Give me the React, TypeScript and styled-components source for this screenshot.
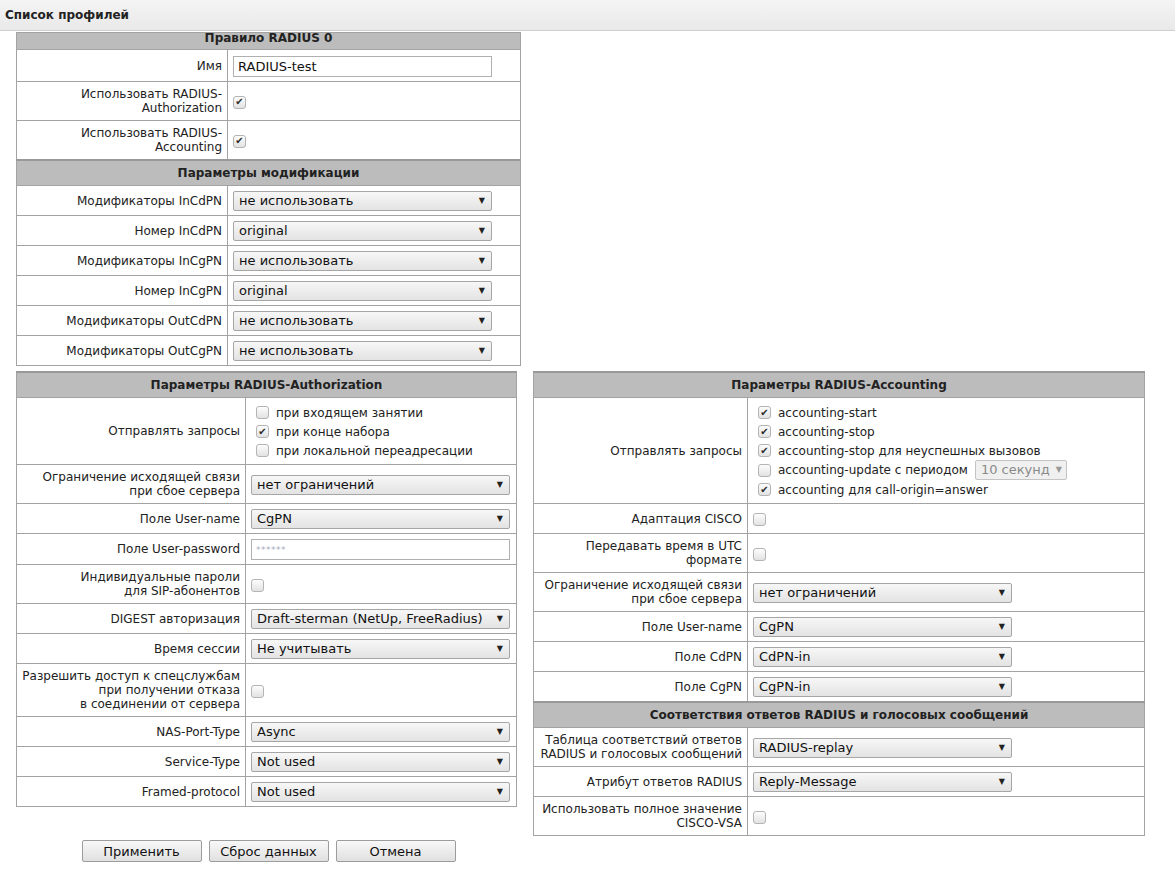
import styled, { createGlobalStyle } from "styled-components";

const GlobalStyle = createGlobalStyle`
  body {
    margin: 0;
    background: #fff;
    color: #222;
    font-family: "DejaVu Sans", "Noto Sans", sans-serif;
    font-size: 12px;
  }
`;

const TitleBar = styled.div`
  height: 30px;
  display: flex;
  align-items: center;
  padding-left: 5px;
  background: linear-gradient(#f4f4f4, #e9e9e9);
  border-bottom: 1px solid #cfcfcf;
  font-weight: bold;
  color: #222;
`;

const Content = styled.div`
  padding: 1px 0 0 16px;
`;

const Columns = styled.div`
  display: flex;
  align-items: flex-start;
  gap: 16px;
  margin-top: 5px;
`;

const LeftColumn = styled.div`
  display: flex;
  flex-direction: column;
  align-items: center;
`;

const FormTable = styled.table<{ $w: number }>`
  width: ${({ $w }) => $w}px;
  table-layout: fixed;
  border-collapse: collapse;
  border: 1px solid #a3a3a3;
`;

const LabelCol = styled.col<{ $w: number }>`
  width: ${({ $w }) => $w}px;
`;

const Tr = styled.tr`
  height: 30px;
`;

const Head = styled.th<{ $clipped?: boolean }>`
  background: #bcbcbc;
  border: 1px solid #a3a3a3;
  border-top: ${({ $clipped }) => ($clipped ? "none" : "2px solid #999")};
  padding: ${({ $clipped }) => ($clipped ? "0 5px 5px" : "5px")};
  line-height: ${({ $clipped }) => ($clipped ? "11px" : "14px")};
  font-weight: bold;
  text-align: center;
`;

const Label = styled.td`
  border: 1px solid #a3a3a3;
  padding: 5px 5px;
  line-height: 14px;
  text-align: right;
  vertical-align: middle;
`;

const Value = styled.td`
  border: 1px solid #a3a3a3;
  padding: 5px 5px 4px;
  line-height: 14px;
  vertical-align: middle;
`;

const SelectBox = styled.div<{ $w: number; $disabled?: boolean }>`
  box-sizing: border-box;
  width: ${({ $w }) => $w}px;
  height: 20px;
  display: flex;
  align-items: center;
  justify-content: space-between;
  padding: 0 6px 0 5px;
  border: 1px solid ${({ $disabled }) => ($disabled ? "#c4c4c4" : "#a6a6a6")};
  border-radius: 2px;
  background: ${({ $disabled }) =>
    $disabled ? "#f0f0f0" : "linear-gradient(#f7f7f7, #e3e3e3)"};
  color: ${({ $disabled }) => ($disabled ? "#8a8a8a" : "#111")};
  font-size: 13px;
  white-space: nowrap;
`;

const Arrow = styled.span<{ $disabled?: boolean }>`
  font-size: 8px;
  color: ${({ $disabled }) => ($disabled ? "#999" : "#222")};
  margin-left: 6px;
`;

const TextInput = styled.div<{ $placeholder?: boolean }>`
  box-sizing: border-box;
  width: 259px;
  height: 21px;
  margin: ${({ $placeholder }) => ($placeholder ? "0" : "1px 0 0")};
  display: flex;
  align-items: center;
  padding: 0 4px;
  border: 1px solid #b0b0b0;
  background: #fff;
  color: ${({ $placeholder }) => ($placeholder ? "#aab" : "#111")};
  font-size: ${({ $placeholder }) => ($placeholder ? "9px" : "13px")};
  letter-spacing: ${({ $placeholder }) => ($placeholder ? "0.5px" : "0")};
`;

const Box = styled.span`
  box-sizing: border-box;
  width: 13px;
  height: 13px;
  flex: none;
  display: inline-flex;
  align-items: center;
  justify-content: center;
  border: 1px solid #b4b4b4;
  border-radius: 3px;
  background: linear-gradient(#fdfdfd, #e2e2e2);
  color: #2a2a2a;
  font-size: 10px;
  line-height: 1;
  vertical-align: middle;
`;

const OptionList = styled.div`
  display: flex;
  flex-direction: column;
`;

const OptionItem = styled.label<{ $tall?: boolean }>`
  display: flex;
  align-items: center;
  gap: 7px;
  height: ${({ $tall }) => ($tall ? 20 : 19)}px;
  padding-left: 5px;
  font-size: 12px;
  white-space: nowrap;
`;

const ButtonBar = styled.div`
  display: flex;
  gap: 7px;
  margin: 33px 0 0 4px;
`;

const Button = styled.button`
  box-sizing: border-box;
  width: 120px;
  height: 22px;
  padding: 0;
  border: 1px solid #9c9c9c;
  border-radius: 2px;
  background: linear-gradient(#f8f8f8, #e0e0e0);
  color: #111;
  font-family: "DejaVu Sans", sans-serif;
  font-size: 13px;
`;

const Check = ({ on }: { on?: boolean }) => <Box>{on ? "✔" : ""}</Box>;

const Select = ({ value, w = 259, disabled }: { value: string; w?: number; disabled?: boolean }) => (
  <SelectBox $w={w} $disabled={disabled}>
    <span>{value}</span>
    <Arrow $disabled={disabled}>▼</Arrow>
  </SelectBox>
);

const Lines = ({ text }: { text: string[] }) => (
  <>
    {text.map((t, i) => (
      <div key={i}>{t}</div>
    ))}
  </>
);

type RowProps = { label: string[]; children: React.ReactNode };

const Row = ({ label, children }: RowProps) => (
  <Tr>
    <Label>
      <Lines text={label} />
    </Label>
    <Value>{children}</Value>
  </Tr>
);

const modifiers = [
  ["Модификаторы InCdPN", "не использовать"],
  ["Номер InCdPN", "original"],
  ["Модификаторы InCgPN", "не использовать"],
  ["Номер InCgPN", "original"],
  ["Модификаторы OutCdPN", "не использовать"],
  ["Модификаторы OutCgPN", "не использовать"],
];

export default function App() {
  return (
    <>
      <GlobalStyle />
      <TitleBar>Список профилей</TitleBar>
      <Content>
        <FormTable $w={505}>
          <colgroup>
            <LabelCol $w={211} />
            <col />
          </colgroup>
          <tbody>
            <tr>
              <Head colSpan={2} $clipped>
                Правило RADIUS 0
              </Head>
            </tr>
            <Row label={["Имя"]}>
              <TextInput>RADIUS-test</TextInput>
            </Row>
            <Row label={["Использовать RADIUS-", "Authorization"]}>
              <Check on />
            </Row>
            <Row label={["Использовать RADIUS-", "Accounting"]}>
              <Check on />
            </Row>
            <tr>
              <Head colSpan={2}>Параметры модификации</Head>
            </tr>
            {modifiers.map(([label, value]) => (
              <Row key={label} label={[label]}>
                <Select value={value} />
              </Row>
            ))}
          </tbody>
        </FormTable>

        <Columns>
          <LeftColumn>
            <FormTable $w={501}>
              <colgroup>
                <LabelCol $w={229} />
                <col />
              </colgroup>
              <tbody>
                <tr>
                  <Head colSpan={2}>Параметры RADIUS-Authorization</Head>
                </tr>
                <Row label={["Отправлять запросы"]}>
                  <OptionList>
                    <OptionItem>
                      <Check />
                      при входящем занятии
                    </OptionItem>
                    <OptionItem>
                      <Check on />
                      при конце набора
                    </OptionItem>
                    <OptionItem>
                      <Check />
                      при локальной переадресации
                    </OptionItem>
                  </OptionList>
                </Row>
                <Row label={["Ограничение исходящей связи", "при сбое сервера"]}>
                  <Select value="нет ограничений" />
                </Row>
                <Row label={["Поле User-name"]}>
                  <Select value="CgPN" />
                </Row>
                <Row label={["Поле User-password"]}>
                  <TextInput $placeholder>******</TextInput>
                </Row>
                <Row label={["Индивидуальные пароли", "для SIP-абонентов"]}>
                  <Check />
                </Row>
                <Row label={["DIGEST авторизация"]}>
                  <Select value="Draft-sterman (NetUp, FreeRadius)" />
                </Row>
                <Row label={["Время сессии"]}>
                  <Select value="Не учитывать" />
                </Row>
                <Row
                  label={[
                    "Разрешить доступ к спецслужбам",
                    "при получении отказа",
                    "в соединении от сервера",
                  ]}
                >
                  <Check />
                </Row>
                <Row label={["NAS-Port-Type"]}>
                  <Select value="Async" />
                </Row>
                <Row label={["Service-Type"]}>
                  <Select value="Not used" />
                </Row>
                <Row label={["Framed-protocol"]}>
                  <Select value="Not used" />
                </Row>
              </tbody>
            </FormTable>
            <ButtonBar>
              <Button>Применить</Button>
              <Button>Сброс данных</Button>
              <Button>Отмена</Button>
            </ButtonBar>
          </LeftColumn>

          <FormTable $w={612}>
            <colgroup>
              <LabelCol $w={214} />
              <col />
            </colgroup>
            <tbody>
              <tr>
                <Head colSpan={2}>Параметры RADIUS-Accounting</Head>
              </tr>
              <Row label={["Отправлять запросы"]}>
                <OptionList>
                  <OptionItem>
                    <Check on />
                    accounting-start
                  </OptionItem>
                  <OptionItem>
                    <Check on />
                    accounting-stop
                  </OptionItem>
                  <OptionItem>
                    <Check on />
                    accounting-stop для неуспешных вызовов
                  </OptionItem>
                  <OptionItem $tall>
                    <Check />
                    accounting-update с периодом
                    <Select value="10 секунд" w={92} disabled />
                  </OptionItem>
                  <OptionItem>
                    <Check on />
                    accounting для call-origin=answer
                  </OptionItem>
                </OptionList>
              </Row>
              <Row label={["Адаптация CISCO"]}>
                <Check />
              </Row>
              <Row label={["Передавать время в UTC", "формате"]}>
                <Check />
              </Row>
              <Row label={["Ограничение исходящей связи", "при сбое сервера"]}>
                <Select value="нет ограничений" />
              </Row>
              <Row label={["Поле User-name"]}>
                <Select value="CgPN" />
              </Row>
              <Row label={["Поле CdPN"]}>
                <Select value="CdPN-in" />
              </Row>
              <Row label={["Поле CgPN"]}>
                <Select value="CgPN-in" />
              </Row>
              <tr>
                <Head colSpan={2}>Соответствия ответов RADIUS и голосовых сообщений</Head>
              </tr>
              <Row label={["Таблица соответствий ответов", "RADIUS и голосовых сообщений"]}>
                <Select value="RADIUS-replay" />
              </Row>
              <Row label={["Атрибут ответов RADIUS"]}>
                <Select value="Reply-Message" />
              </Row>
              <Row label={["Использовать полное значение", "CISCO-VSA"]}>
                <Check />
              </Row>
            </tbody>
          </FormTable>
        </Columns>
      </Content>
    </>
  );
}
